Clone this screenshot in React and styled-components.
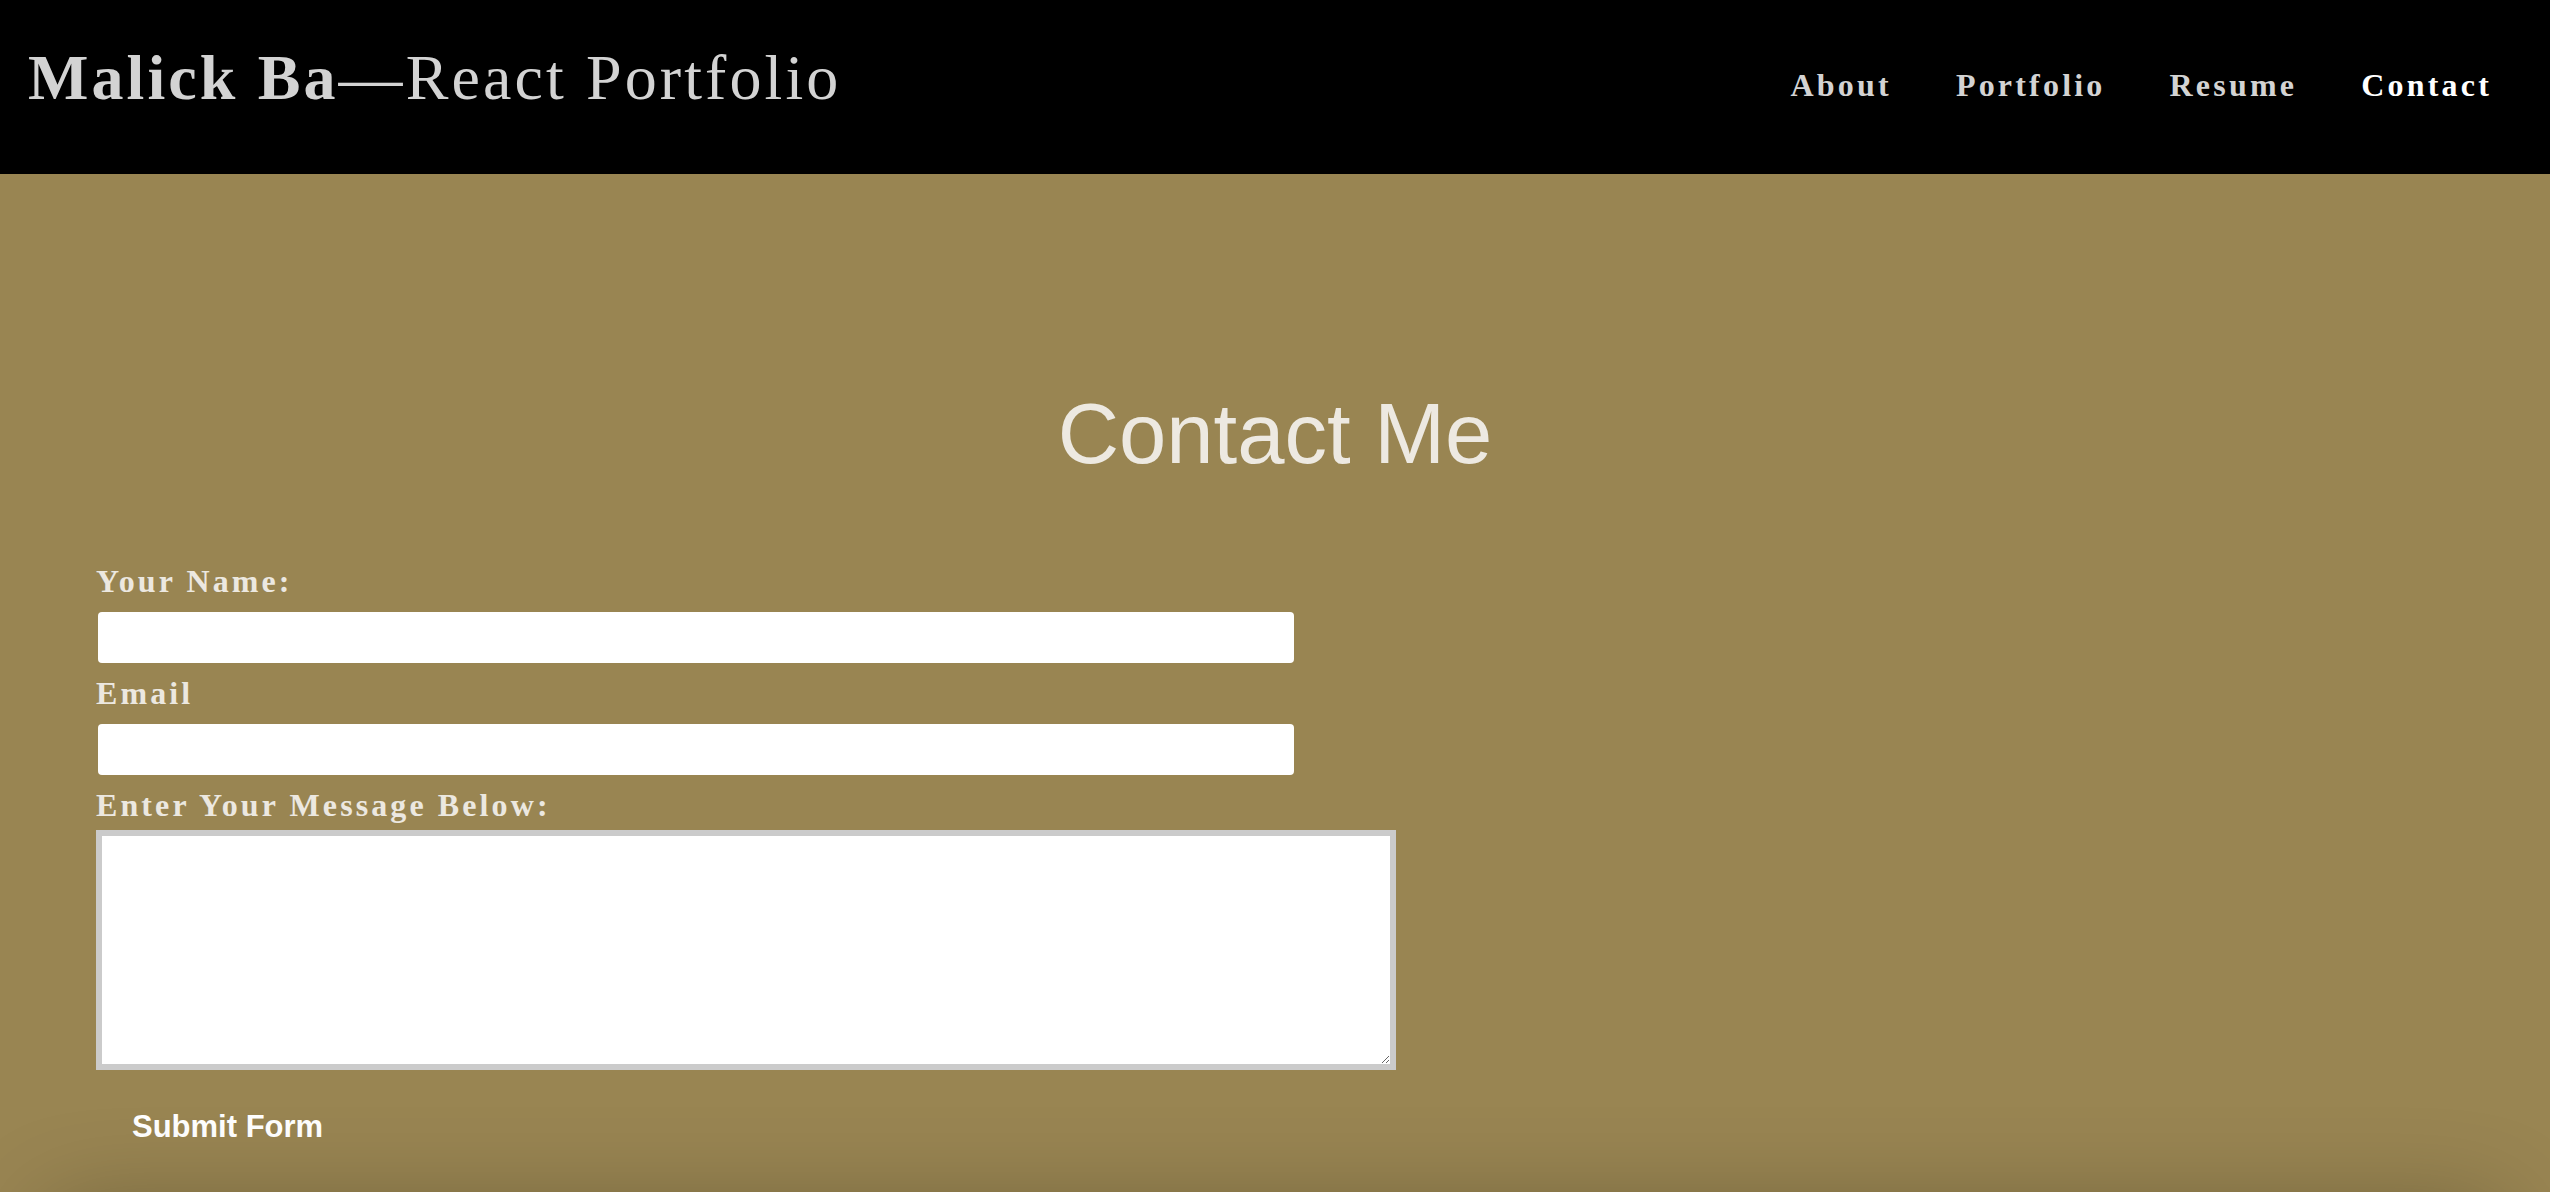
import React from "react";
import styled, { createGlobalStyle } from "styled-components";

const GlobalStyle = createGlobalStyle`
  html, body {
    margin: 0;
    padding: 0;
    background: #998552;
  }
  body {
    font-family: "Liberation Serif", "Times New Roman", serif;
    overflow: hidden;
  }
  * { box-sizing: border-box; }
`;

const Page = styled.div`
  display: flex;
  flex-direction: column;
  min-height: 100vh;
`;

const Header = styled.header`
  display: flex;
  justify-content: space-between;
  align-items: flex-start;
  height: 174px;
  padding: 0 58px 0 28px;
  background: #000000;
`;

const Title = styled.h1`
  margin: 46px 0 0;
  font-family: "Liberation Serif", "Times New Roman", serif;
  font-size: 64px;
  line-height: 64px;
  font-weight: 400;
  letter-spacing: 3.1px;
  color: #d3d3d3;
  white-space: nowrap;
`;

const Strong = styled.span`
  font-weight: 700;
`;

const Nav = styled.nav`
  display: flex;
  gap: 64px;
  margin-top: 69px;
`;

const NavLink = styled.a`
  font-family: "Liberation Serif", "Times New Roman", serif;
  font-size: 32px;
  line-height: 32px;
  font-weight: 700;
  letter-spacing: 3.2px;
  text-decoration: none;
  color: ${(p) => (p.$active ? "#ffffff" : "#d3d3d3")};
  cursor: pointer;
`;

const Main = styled.main`
  display: flex;
  flex-direction: column;
  padding: 217px 0 60px;
`;

const Heading = styled.h2`
  margin: 0;
  text-align: center;
  font-family: "Liberation Sans", Arial, sans-serif;
  font-weight: 400;
  font-size: 85px;
  line-height: 85px;
  color: #ede9e1;
`;

const Form = styled.form`
  display: flex;
  flex-direction: column;
  align-items: flex-start;
  padding: 87px 0 0 96px;
`;

const Label = styled.label`
  display: block;
  font-family: "Liberation Serif", "Times New Roman", serif;
  font-weight: 700;
  font-size: 32px;
  line-height: 36px;
  letter-spacing: 3.1px;
  color: #ece8e0;
`;

const Input = styled.input`
  width: 1196px;
  height: 51px;
  margin: 13px 0 12px 2px;
  border: none;
  border-radius: 4px;
  background: #ffffff;
  outline: none;
`;

const TextArea = styled.textarea`
  width: 1300px;
  height: 240px;
  margin-top: 7px;
  border: 6px solid #cbcbcb;
  border-radius: 0;
  background: #ffffff;
  outline: none;
`;

const SubmitButton = styled.button`
  margin-top: 21px;
  padding: 20px 36px;
  border: none;
  background: transparent;
  font-family: "Liberation Sans", Arial, sans-serif;
  font-weight: 700;
  font-size: 31px;
  line-height: 31px;
  color: #ffffff;
  cursor: pointer;
`;

const Footer = styled.footer`
  height: 160px;
  margin: 0 60px;
  background: #8a7a4c;
  box-shadow: 0 0 100px 10px rgba(0, 0, 0, 0.3);
`;

export default function App() {
  const links = ["About", "Portfolio", "Resume", "Contact"];
  return (
    <>
      <GlobalStyle />
      <Page>
        <Header>
          <Title>
            <Strong>Malick Ba</Strong>—React Portfolio
          </Title>
          <Nav>
            {links.map((l) => (
              <NavLink key={l} $active={l === "Contact"}>
                {l}
              </NavLink>
            ))}
          </Nav>
        </Header>
        <Main>
          <Heading>Contact Me</Heading>
          <Form onSubmit={(e) => e.preventDefault()}>
            <Label htmlFor="name">Your Name:</Label>
            <Input id="name" type="text" name="name" />
            <Label htmlFor="email">Email</Label>
            <Input id="email" type="email" name="email" />
            <Label htmlFor="message">Enter Your Message Below:</Label>
            <TextArea id="message" name="message" />
            <SubmitButton type="submit">Submit Form</SubmitButton>
          </Form>
        </Main>
        <Footer />
      </Page>
    </>
  );
}
